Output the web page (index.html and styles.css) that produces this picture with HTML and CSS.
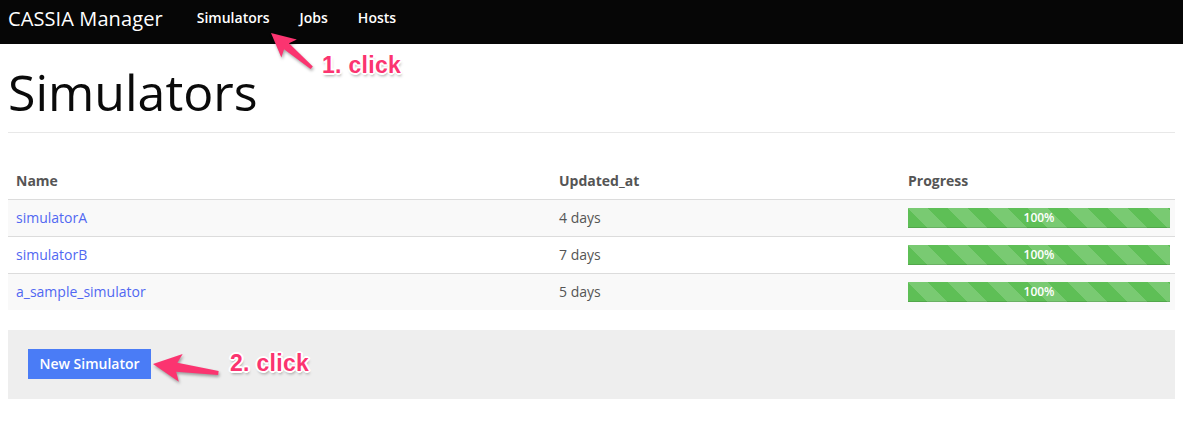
FILE: index.html
```html
<!DOCTYPE html>
<html>
<head>
<meta charset="utf-8">
<title>CASSIA Manager</title>
<link rel="stylesheet" href="styles.css">
</head>
<body>
<nav class="navbar">
  <a class="brand" href="#">CASSIA Manager</a>
  <ul class="nav">
    <li><a href="#">Simulators</a></li>
    <li><a href="#">Jobs</a></li>
    <li><a href="#">Hosts</a></li>
  </ul>
</nav>
<main class="container">
  <div class="page-header"><h1>Simulators</h1></div>
  <table class="table">
    <colgroup><col class="c-name"><col class="c-upd"><col></colgroup>
    <thead>
      <tr><th>Name</th><th>Updated_at</th><th>Progress</th></tr>
    </thead>
    <tbody>
      <tr class="odd"><td><a href="#">simulatorA</a></td><td>4 days</td><td class="prog"><div class="progress"><div class="bar" style="width:100%">100%</div></div></td></tr>
      <tr><td><a href="#">simulatorB</a></td><td>7 days</td><td class="prog"><div class="progress"><div class="bar" style="width:100%">100%</div></div></td></tr>
      <tr class="odd"><td><a href="#">a_sample_simulator</a></td><td>5 days</td><td class="prog"><div class="progress"><div class="bar" style="width:100%">100%</div></div></td></tr>
    </tbody>
  </table>
  <div class="well"><a class="btn" href="#">New Simulator</a></div>
</main>
<div class="annotations">
  <svg class="arrows" width="1183" height="427" viewBox="0 0 1183 427">
    <g transform="translate(271,33) rotate(40.5) scale(0.85)">
      <polygon points="0,0 28,-14 24,-4.5 63,-2 63,2 24,4.5 28,14"/>
    </g>
    <g transform="translate(153,364) rotate(7.9)">
      <polygon points="0,0 28,-14 24,-4.5 66,-2 66,2 24,4.5 28,14"/>
    </g>
  </svg>
  <span class="note note1">1. click</span>
  <span class="note note2">2. click</span>
</div>
</body>
</html>
```
FILE: styles.css
```css
html, body {
  margin: 0;
  padding: 0;
}
body {
  position: relative;
  width: 1183px;
  min-height: 427px;
  background: #fff;
  font-family: "Open Sans", "Noto Sans", sans-serif;
  font-size: 14px;
  line-height: 20px;
  color: #555;
}
a { text-decoration: none; }

.navbar {
  display: flex;
  align-items: center;
  height: 44px;
  background: #060606;
  padding: 0 8px;
}
.brand {
  color: #fff;
  font-size: 20px;
  line-height: 44px;
  height: 44px;
  margin-right: 19px;
  letter-spacing: 0.1px;
  position: relative;
  top: -3px;
}
.nav {
  display: flex;
  list-style: none;
  margin: 0;
  padding: 0;
}
.nav a {
  display: block;
  padding: 0 15px;
  color: #fff;
  font-weight: 600;
  font-size: 14px;
  line-height: 36px;
  height: 44px;
}

.container {
  padding: 0 8px;
}
.page-header {
  margin-top: 21px;
  padding-bottom: 12px;
  border-bottom: 1px solid #e8e8e8;
  margin-bottom: 30px;
}
.page-header h1 {
  margin: 0;
  font-size: 50px;
  line-height: 55px;
  font-weight: 400;
  color: #0a0a0a;
}

.table {
  width: 100%;
  border-collapse: collapse;
  margin-bottom: 20px;
}
.c-name { width: 543px; }
.c-upd { width: 349px; }
.table th {
  text-align: left;
  font-weight: 700;
  padding: 8px;
  line-height: 20px;
  color: #555;
}
.table td {
  padding: 8px;
  line-height: 20px;
  border-top: 1px solid #dcdcdc;
  vertical-align: top;
}
.table tr.odd td { background: #f9f9f9; }
.table td a { color: #5168f2; }
.table td.prog { padding-right: 5px; }

.progress {
  height: 20px;
  background: #f5f5f5;
  overflow: hidden;
}
.bar {
  height: 20px;
  background-color: #5ebf56;
  background-image: linear-gradient(45deg, rgba(255,255,255,.17) 25%, transparent 25%, transparent 50%, rgba(255,255,255,.17) 50%, rgba(255,255,255,.17) 75%, transparent 75%, transparent);
  background-size: 40px 40px;
  box-shadow: inset 0 -1px 0 rgba(0,0,0,.12);
  color: #fff;
  font-size: 12px;
  font-weight: 600;
  line-height: 20px;
  text-align: center;
}

.well {
  background: #eeeeee;
  padding: 19px 20px 20px;
}
.btn {
  display: inline-block;
  vertical-align: top;
  height: 30px;
  line-height: 30px;
  padding: 0 11.5px;
  background: #4a7cf6;
  color: #fff;
  font-weight: 600;
  font-size: 14px;
}

.annotations {
  position: absolute;
  left: 0;
  top: 0;
  width: 1183px;
  height: 427px;
  pointer-events: none;
}
.arrows {
  position: absolute;
  left: 0;
  top: 0;
  fill: #fb3470;
  filter: drop-shadow(1px 2px 1.5px rgba(0,0,0,.35));
}
.note {
  position: absolute;
  font-family: "Liberation Sans", Arial, sans-serif;
  font-weight: 700;
  font-size: 23px;
  line-height: 23px;
  letter-spacing: 0.3px;
  color: #fb3470;
  white-space: nowrap;
  text-shadow:
    2px 0 0 #fff, -2px 0 0 #fff, 0 2px 0 #fff, 0 -2px 0 #fff,
    1.4px 1.4px 0 #fff, -1.4px -1.4px 0 #fff, 1.4px -1.4px 0 #fff, -1.4px 1.4px 0 #fff,
    1px 3px 3px rgba(0,0,0,.35);
}
.note1 { left: 322px; top: 54px; }
.note2 { left: 230px; top: 352px; }
```
